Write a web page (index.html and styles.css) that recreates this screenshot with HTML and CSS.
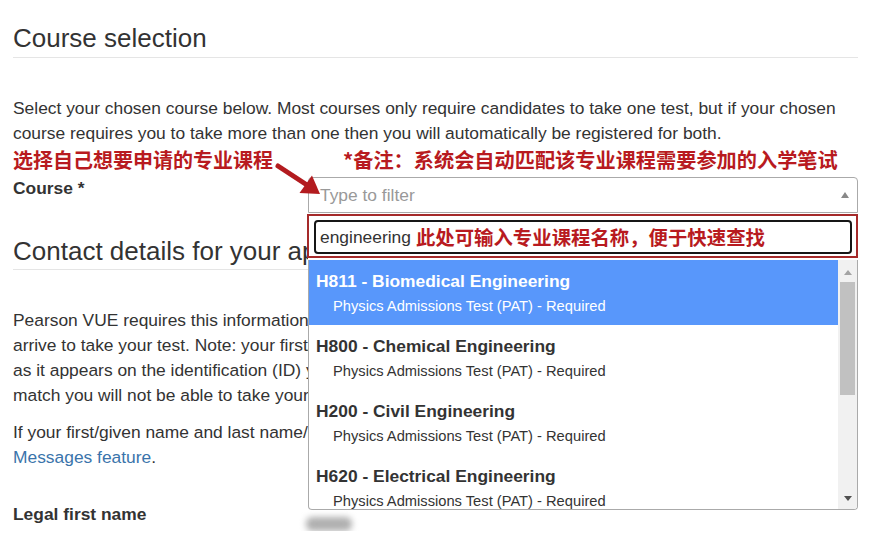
FILE: index.html
```html
<!DOCTYPE html>
<html lang="en">
<head>
<meta charset="utf-8">
<title>Course selection</title>
<link rel="stylesheet" href="styles.css">
</head>
<body>
<div class="page">
  <h2 class="section-title first">Course selection</h2>
  <p class="intro">Select your chosen course below. Most courses only require candidates to take one test, but if your chosen course requires you to take more than one then you will automatically be registered for both.</p>
  <div class="note-row">
    <span class="note">选择自己想要申请的专业课程</span>
    <span class="note note-right">*备注：系统会自动匹配该专业课程需要参加的入学笔试</span>
  </div>
  <div class="form-row course-row">
    <label class="form-label">Course *</label>
    <div class="field-col">
      <div class="select-box">
        <span class="placeholder">Type to filter</span>
        <span class="caret-up"></span>
      </div>
      <div class="dropdown">
        <div class="search-wrap">
          <div class="search-box"><span class="search-value">engineering</span><span class="search-note">此处可输入专业课程名称，便于快速查找</span></div>
        </div>
        <div class="results">
          <ul class="result-list">
            <li class="result highlighted"><div class="r-title">H811 - Biomedical Engineering</div><div class="r-sub">Physics Admissions Test (PAT) - Required</div></li>
            <li class="result"><div class="r-title">H800 - Chemical Engineering</div><div class="r-sub">Physics Admissions Test (PAT) - Required</div></li>
            <li class="result"><div class="r-title">H200 - Civil Engineering</div><div class="r-sub">Physics Admissions Test (PAT) - Required</div></li>
            <li class="result"><div class="r-title">H620 - Electrical Engineering</div><div class="r-sub">Physics Admissions Test (PAT) - Required</div></li>
          </ul>
          <div class="scrollbar">
            <span class="sb-up"></span>
            <span class="sb-thumb"></span>
            <span class="sb-down"></span>
          </div>
        </div>
      </div>
    </div>
  </div>
  <h2 class="section-title second">Contact details for your application</h2>
  <p class="body-text">Pearson VUE requires this information so that they can confirm your identity at the test centre when you<br>arrive to take your test. Note: your first/given name and last name/surname must be entered exactly<br>as it appears on the identification (ID) you will present at the test centre. If the details do not<br>match you will not be able to take your test.</p>
  <p class="body-text tight">If your first/given name and last name/surname contain characters that cannot be entered, please use the<br><a class="link" href="#">Messages feature</a>.</p>
  <div class="form-row name-row">
    <label class="form-label">Legal first name</label>
    <div class="field-col"><span class="blurred"></span></div>
  </div>
  <svg class="arrow" width="60" height="44" viewBox="0 0 60 44" aria-hidden="true">
    <line x1="8" y1="8" x2="37" y2="27" stroke="#b31b1f" stroke-width="5" stroke-linecap="round"/>
    <polygon points="50,36 29.5,35 42,17.5" fill="#b31b1f"/>
  </svg>
</div>
</body>
</html>
```

FILE: styles.css
```css
* { box-sizing: border-box; }

body {
  margin: 0;
  background: #ffffff;
  font-family: "Liberation Sans", Arial, "Noto Sans CJK SC", sans-serif;
  font-size: 17.4px;
  line-height: 24.9px;
  color: #333333;
}

.page {
  position: relative;
  padding: 24px 21px 0 13px;
}

.section-title {
  margin: 0;
  font-size: 26px;
  font-weight: 400;
  line-height: 28.6px;
  padding-bottom: 4px;
  border-bottom: 1px solid #e5e5e5;
  color: #333333;
}

.section-title.second {
  margin-top: 23.7px;
  white-space: nowrap;
}

.intro {
  margin: 38px 0 0;
}

.body-text {
  margin: 38px 0 0;
  white-space: nowrap;
}

.body-text.tight {
  margin-top: 12.5px;
}

.link {
  color: #3a74ab;
  text-decoration: none;
}

.note-row {
  display: grid;
  grid-template-columns: 330px 1fr;
  height: 30px;
  line-height: 30px;
}

.note {
  font-family: "Noto Sans CJK SC", "Liberation Sans", sans-serif;
  font-size: 20px;
  font-weight: 700;
  color: #b81a20;
  white-space: nowrap;
}

.note-right {
  font-size: 20.2px;
}

.form-row {
  display: grid;
  grid-template-columns: 295px 1fr;
}

.course-row {
  margin-top: 1.6px;
}

.name-row {
  margin-top: 33px;
}

.form-label {
  font-weight: 700;
  line-height: 22px;
}

.field-col {
  position: relative;
}

.select-box {
  height: 36px;
  border: 1px solid #aaaaaa;
  border-radius: 4px 4px 0 0;
  display: flex;
  align-items: center;
  justify-content: space-between;
  padding: 0 8px 0 11px;
  background: #ffffff;
}

.placeholder {
  color: #999999;
}

.caret-up {
  width: 0;
  height: 0;
  border-style: solid;
  border-width: 0 4.5px 6px 4.5px;
  border-color: transparent transparent #888888 transparent;
}

.dropdown {
  position: absolute;
  top: 37px;
  left: 0;
  right: 0;
  z-index: 5;
  background: #ffffff;
}

.search-wrap {
  margin-left: -1px;
  border: 2px solid #a52a2a;
  padding: 4px 4px 2px 5px;
  background: #ffffff;
}

.search-box {
  height: 34px;
  border: 2px solid #161616;
  border-radius: 4px;
  padding: 0 4px;
  display: flex;
  align-items: center;
  white-space: nowrap;
}

.search-value {
  color: #333333;
}

.search-note {
  margin-left: 5px;
  font-family: "Noto Sans CJK SC", "Liberation Sans", sans-serif;
  font-size: 19.4px;
  font-weight: 700;
  color: #b81a20;
}

.results {
  margin-top: 2px;
  height: 250px;
  border: 1px solid #aaaaaa;
  border-top: none;
  border-radius: 0 0 4px 4px;
  display: flex;
  overflow: hidden;
}

.result-list {
  list-style: none;
  margin: 0;
  padding: 0;
  flex: 1;
  overflow: hidden;
}

.result {
  height: 65px;
  padding: 9px 0 0 7px;
  color: #333333;
}

.result.highlighted {
  background: #5897fb;
  color: #ffffff;
}

.r-title {
  font-weight: 700;
  line-height: 24px;
  white-space: nowrap;
}

.r-sub {
  margin-top: 3px;
  padding-left: 17px;
  font-size: 14.7px;
  line-height: 20px;
  white-space: nowrap;
}

.scrollbar {
  width: 19px;
  background: #f1f1f1;
  display: flex;
  flex-direction: column;
  align-items: center;
}

.sb-up {
  margin-top: 10px;
  width: 0;
  height: 0;
  border-style: solid;
  border-width: 0 4px 5px 4px;
  border-color: transparent transparent #a3a3a3 transparent;
}

.sb-thumb {
  margin-top: 7px;
  width: 15px;
  height: 113px;
  background: #c1c1c1;
}

.sb-down {
  margin-top: auto;
  margin-bottom: 8px;
  width: 0;
  height: 0;
  border-style: solid;
  border-width: 5px 4px 0 4px;
  border-color: #505050 transparent transparent transparent;
}

.blurred {
  display: block;
  margin: 14px 0 0 -2px;
  width: 46px;
  height: 14px;
  border-radius: 6px;
  background: #b0b0b0;
  filter: blur(3px);
}

.arrow {
  position: absolute;
  left: 270px;
  top: 158px;
  z-index: 6;
}
```
